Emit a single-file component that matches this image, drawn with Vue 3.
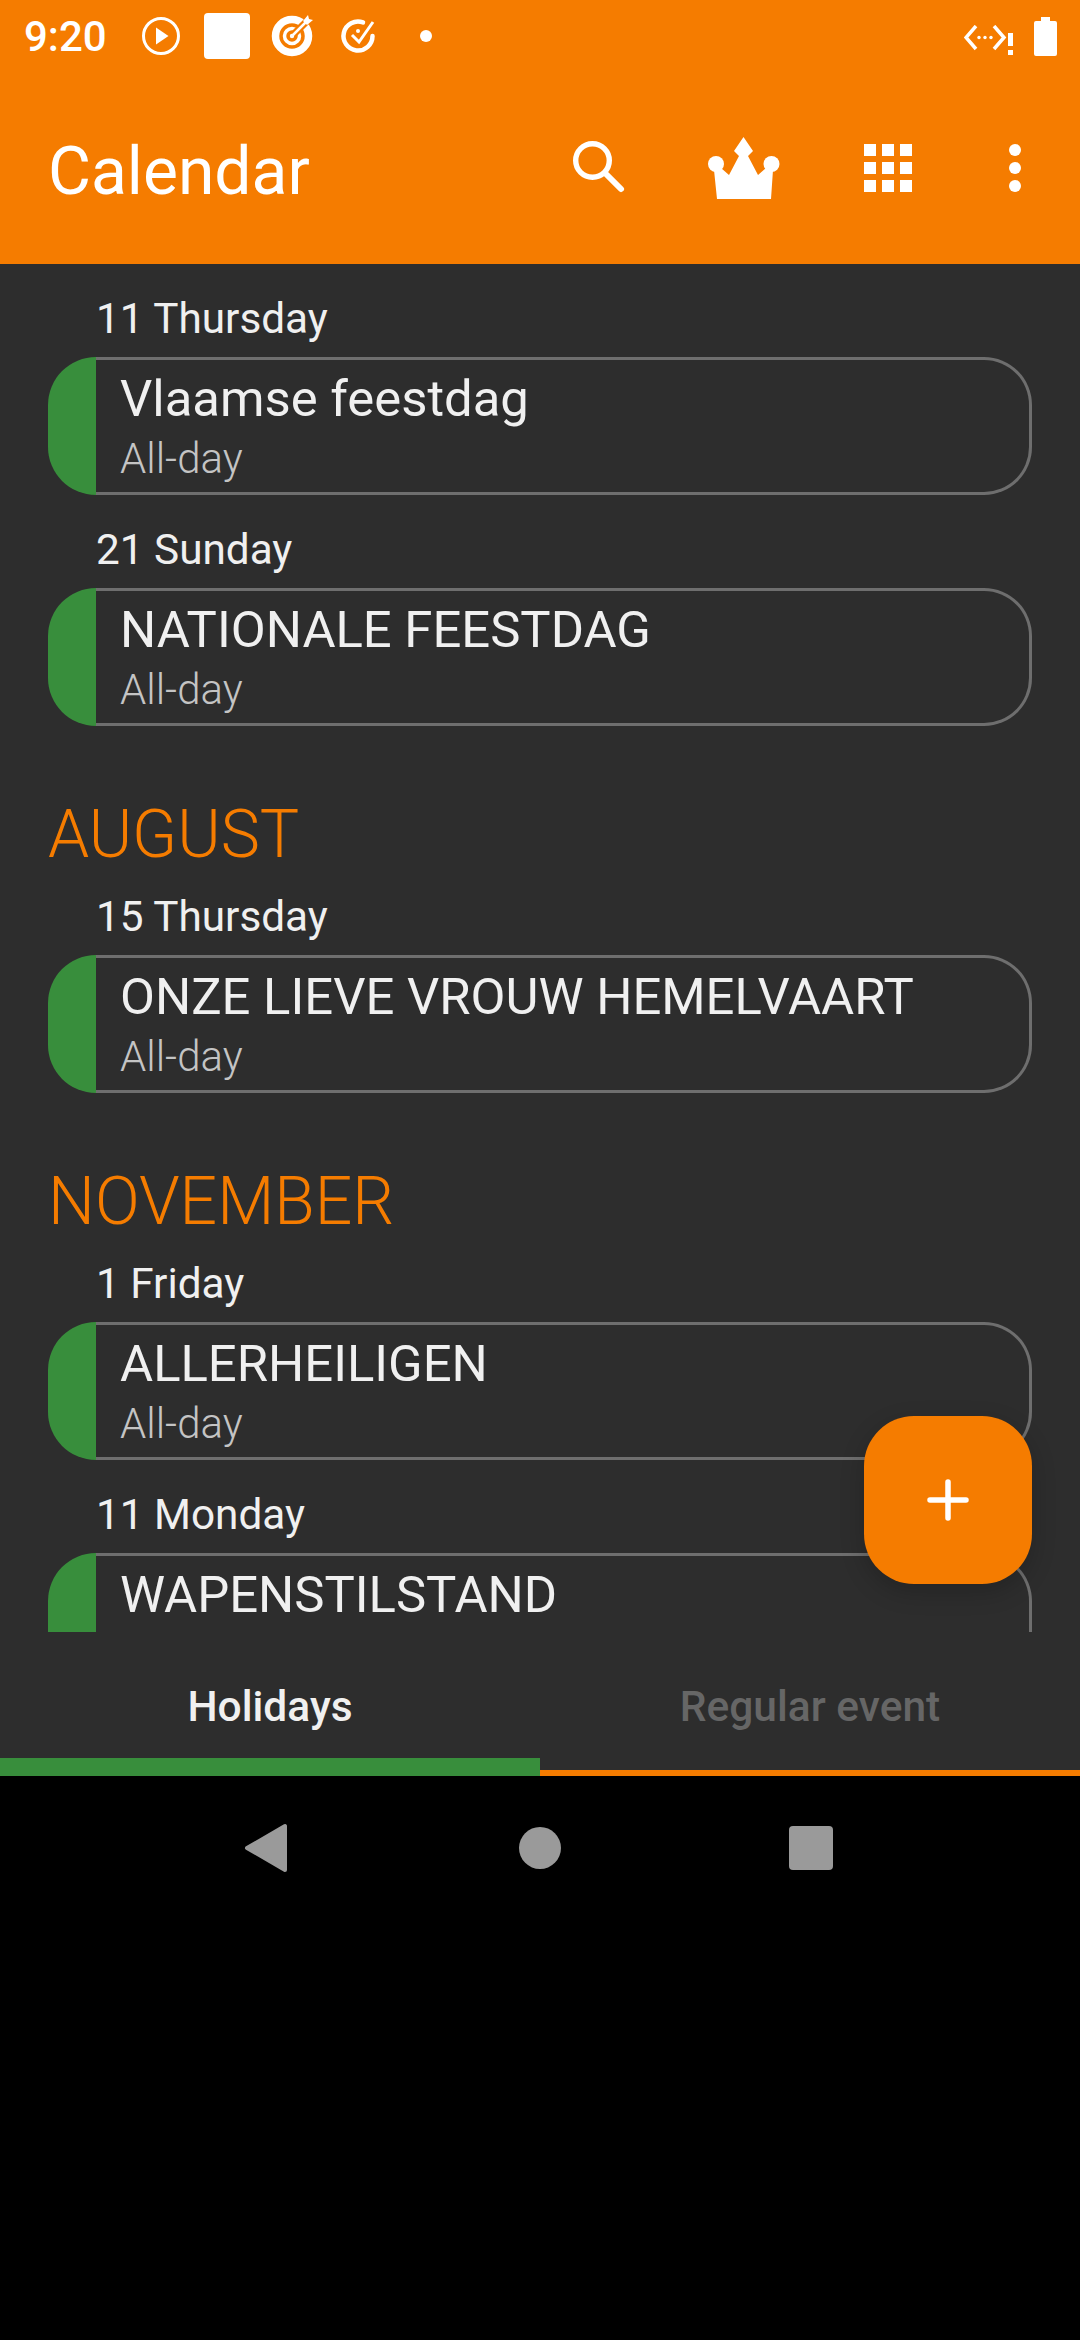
<template>
  <div class="screen">
    <header class="appbar">
      <div class="status">
        <span class="clock">9:20</span>
        <svg class="st-play" width="40" height="40" viewBox="0 0 40 40">
          <circle cx="20" cy="20" r="17.5" fill="none" stroke="#fff" stroke-width="3" />
          <path d="M15 11.5 L27.5 20 L15 28.5 Z" fill="#fff" />
        </svg>
        <div class="st-square"></div>
        <svg class="st-target" width="44" height="44" viewBox="0 0 44 44">
          <circle cx="22" cy="22" r="16.5" fill="none" stroke="#fff" stroke-width="7.5" />
          <circle cx="22" cy="22" r="7.5" fill="none" stroke="#fff" stroke-width="3.5" />
          <path d="M24 20 L42 2" stroke="#f57c00" stroke-width="7" />
          <circle cx="22" cy="22" r="2.2" fill="#fff" />
          <path d="M22 22 L36 8" stroke="#fff" stroke-width="2.5" />
          <path d="M33 7 L38 1 L39 5 L43 6 L37 11 Z" fill="#fff" />
        </svg>
        <svg class="st-check" width="40" height="40" viewBox="0 0 40 40">
          <path d="M25 6.4 A14.5 14.5 0 1 0 34.5 20" fill="none" stroke="#fff" stroke-width="4.5" stroke-linecap="round" />
          <path d="M15 19 L22 25 L35 6" fill="none" stroke="#f57c00" stroke-width="7" />
          <path d="M14 19 L21 26 L35 6" fill="none" stroke="#fff" stroke-width="3" />
          <circle cx="20" cy="15" r="2" fill="#fff" />
        </svg>
        <div class="st-dot"></div>
        <svg class="st-code" width="50" height="32" viewBox="0 0 50 32">
          <path d="M12 1 L2 12.5 L12 24 M30 1 L40 12.5 L30 24" fill="none" stroke="#fff" stroke-width="3.5" />
          <circle cx="15" cy="12.5" r="1.7" fill="#fff" />
          <circle cx="21" cy="12.5" r="1.7" fill="#fff" />
          <circle cx="27" cy="12.5" r="1.7" fill="#fff" />
          <path d="M44 8 H49 V21 H44 Z M44 25 H49 V30 H44 Z" fill="#fff" />
        </svg>
        <svg class="st-battery" width="23" height="39" viewBox="0 0 23 39">
          <path d="M7 0 H16 V4 H21 Q23 4 23 6 V37 Q23 39 21 39 H2 Q0 39 0 37 V6 Q0 4 2 4 H7 Z" fill="#fff" />
        </svg>
      </div>
      <div class="toolbar">
        <h1 class="title">Calendar</h1>
        <svg class="tb-search" width="54" height="54" viewBox="0 0 54 54">
          <circle cx="19.5" cy="19.5" r="16.8" fill="none" stroke="#fff" stroke-width="5.4" />
          <path d="M34 34 L48 48" stroke="#fff" stroke-width="6" stroke-linecap="round" />
        </svg>
        <svg class="tb-crown" width="72" height="62" viewBox="0 0 72 62">
          <path d="M35.5 0 L45 14 L40 19 L50 38 L58 31 L65 33 L63 62 H9 L6 33 L13 31 L21 38 L31 19 L26 14 Z" fill="#fff" />
          <circle cx="8" cy="27" r="8" fill="#fff" />
          <circle cx="63.5" cy="27" r="8" fill="#fff" />
        </svg>
        <div class="tb-grid">
          <span v-for="n in 9" :key="n"></span>
        </div>
        <div class="tb-more">
          <span></span><span></span><span></span>
        </div>
      </div>
    </header>

    <main class="content">
      <div class="list">
        <section v-for="group in groups" :key="group.month || 'first'">
          <h2 v-if="group.month" class="month">{{ group.month }}</h2>
          <div v-for="item in group.items" :key="item.name">
            <div class="date">{{ item.date }}</div>
            <div class="card">
              <div class="strip"></div>
              <div class="card-body">
                <div class="name">{{ item.name }}</div>
                <div v-if="item.when" class="when">{{ item.when }}</div>
              </div>
            </div>
          </div>
        </section>
      </div>
      <button class="fab">
        <svg width="42" height="42" viewBox="0 0 42 42">
          <path d="M21 3 V39 M3 21 H39" stroke="#fff" stroke-width="5.5" stroke-linecap="round" />
        </svg>
      </button>
    </main>

    <nav class="tabs">
      <div class="tab active">Holidays</div>
      <div class="tab">Regular event</div>
    </nav>

    <footer class="navbar">
      <svg width="46" height="50" viewBox="0 0 46 50">
        <path d="M41 3 V47 L3 25 Z" fill="#9a9a9a" stroke="#9a9a9a" stroke-width="4" stroke-linejoin="round" />
      </svg>
      <div class="nav-circle"></div>
      <div class="nav-square"></div>
    </footer>
  </div>
</template>

<script setup>
const groups = [
  {
    month: '',
    items: [
      { date: '11 Thursday', name: 'Vlaamse feestdag', when: 'All-day' },
      { date: '21 Sunday', name: 'NATIONALE FEESTDAG', when: 'All-day' }
    ]
  },
  {
    month: 'AUGUST',
    items: [{ date: '15 Thursday', name: 'ONZE LIEVE VROUW HEMELVAART', when: 'All-day' }]
  },
  {
    month: 'NOVEMBER',
    items: [
      { date: '1 Friday', name: 'ALLERHEILIGEN', when: 'All-day' },
      // second line is scrolled out of the list here
      { date: '11 Monday', name: 'WAPENSTILSTAND' }
    ]
  }
]
</script>

<style>
html, body {
  background: #000;
}
</style>

<style scoped>
.screen {
  width: 1080px;
  height: 2340px;
  background: #000;
  font-family: Roboto, "Noto Sans", sans-serif;
  overflow: hidden;
}
.appbar {
  height: 264px;
  background: #f57c00;
  color: #fff;
}
.status {
  height: 72px;
  display: flex;
  align-items: center;
  padding-left: 24px;
}
.clock {
  font-size: 42px;
  font-weight: 500;
  width: 117px;
}
.st-square {
  width: 46px;
  height: 46px;
  margin-left: 23px;
  background: #fff;
  border-radius: 4px;
}
.st-target {
  margin-left: 20px;
}
.st-check {
  margin-left: 24px;
}
.st-dot {
  width: 12px;
  height: 12px;
  margin-left: 42px;
  background: #fff;
  border-radius: 50%;
}
.st-code {
  margin-left: 532px;
  margin-top: 10px;
}
.st-battery {
  margin-left: 20px;
}
.toolbar {
  height: 192px;
  display: flex;
  align-items: center;
  padding-left: 48px;
}
.title {
  margin: 6px 0 0;
  font-size: 66px;
  font-weight: 400;
  flex: 1;
}
.tb-crown {
  margin-left: 81px;
}
.tb-grid {
  margin-left: 84px;
  width: 48px;
  height: 48px;
  display: grid;
  grid-template-columns: repeat(3, 12px);
  grid-template-rows: repeat(3, 12px);
  gap: 6px;
}
.tb-grid span {
  background: #fff;
}
.tb-more {
  margin-left: 97px;
  margin-right: 59px;
  width: 12px;
  display: flex;
  flex-direction: column;
  gap: 6px;
}
.tb-more span {
  width: 12px;
  height: 12px;
  background: #fff;
  border-radius: 50%;
}
.content {
  position: relative;
  height: 1368px;
  background: #2d2d2d;
}
.list {
  height: 100%;
  overflow: hidden;
}
.month {
  margin: 0;
  height: 136px;
  padding-left: 48px;
  padding-top: 76px;
  box-sizing: border-box;
  font-size: 66px;
  font-weight: 300;
  line-height: 66px;
  color: #f57c00;
}
.date {
  height: 93px;
  padding-left: 96px;
  padding-top: 30px;
  box-sizing: border-box;
  font-size: 42.3px;
  line-height: 49px;
  color: #f0f0f0;
}
.card {
  display: flex;
  height: 138px;
  margin: 0 48px;
}
.strip {
  width: 48px;
  flex: none;
  background: #388e3c;
  border-radius: 48px 0 0 48px;
}
.card-body {
  flex: 1;
  box-sizing: border-box;
  padding: 11px 0 0 24px;
  border: 3px solid #6e6e6e;
  border-left: 0;
  border-radius: 0 48px 48px 0;
}
.name {
  font-size: 50.8px;
  line-height: 56px;
  color: #f0f0f0;
}
.when {
  font-size: 42px;
  font-weight: 300;
  line-height: 49px;
  margin-top: 7px;
  color: #c4c4c4;
}
.fab {
  position: absolute;
  right: 48px;
  top: 1152px;
  width: 168px;
  height: 168px;
  padding: 0;
  border: 0;
  border-radius: 50px;
  background: #f57c00;
  box-shadow: 0 8px 24px rgba(0, 0, 0, 0.2);
  display: flex;
  align-items: center;
  justify-content: center;
}
.tabs {
  height: 144px;
  display: flex;
  background: #2d2d2d;
  border-bottom: 6px solid #f57c00;
  box-sizing: border-box;
}
.tab {
  flex: 1;
  text-align: center;
  font-size: 42.5px;
  font-weight: 500;
  line-height: 49px;
  padding-top: 50px;
  color: #666;
}
.tab.active {
  color: #f0f0f0;
  height: 144px;
  box-sizing: border-box;
  border-bottom: 18px solid #388e3c;
}
.navbar {
  height: 144px;
  display: flex;
  align-items: center;
  background: #000;
  padding-left: 244px;
}
.nav-circle {
  width: 42px;
  height: 42px;
  margin-left: 229px;
  background: #9a9a9a;
  border-radius: 50%;
}
.nav-square {
  width: 44px;
  height: 44px;
  margin-left: 228px;
  background: #9a9a9a;
  border-radius: 4px;
}
</style>
